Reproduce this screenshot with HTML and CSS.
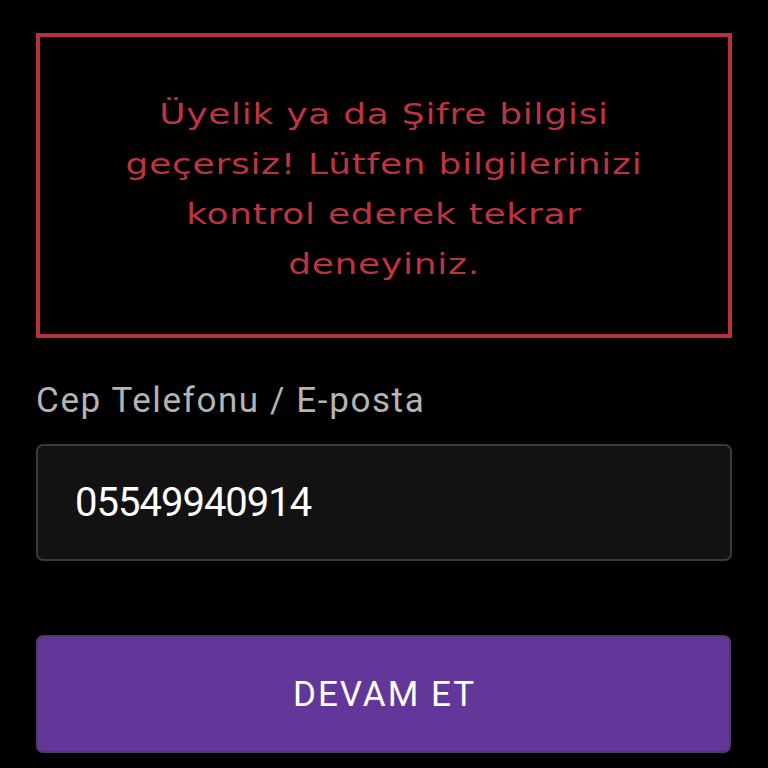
FILE: index.html
```html
<!DOCTYPE html>
<html lang="tr">
<head>
<meta charset="utf-8">
<link rel="stylesheet" href="styles.css">
</head>
<body>
<main class="page">
  <div class="alert">
    <p class="alert-text">Üyelik ya da Şifre bilgisi geçersiz! Lütfen bilgilerinizi kontrol ederek tekrar deneyiniz.</p>
  </div>
  <label class="field-label" for="user">Cep Telefonu / E-posta</label>
  <div class="field">
    <span class="field-value" id="user">05549940914</span>
  </div>
  <button class="btn" type="button">DEVAM ET</button>
</main>
</body>
</html>
```

FILE: styles.css
```css
html, body {
  margin: 0;
  padding: 0;
  background: #000;
}
.page {
  width: 768px;
  height: 768px;
  box-sizing: border-box;
  padding: 33px 36px 0 36px;
  display: flex;
  flex-direction: column;
  overflow: hidden;
}
.alert {
  height: 305px;
  box-sizing: border-box;
  border: 4px solid #b8313a;
  display: flex;
  align-items: center;
  justify-content: center;
  padding: 6px 0 0 0;
}
.alert-text {
  margin: 0;
  width: 460px;
  flex: none;
  text-align: center;
  font-family: "DejaVu Sans", sans-serif;
  font-weight: 400;
  font-size: 29px;
  letter-spacing: 0.6px;
  line-height: 50px;
  color: #bd343e;
  transform: scaleX(1.24);
  transform-origin: center;
}
.field-label {
  margin-top: 43px;
  font-family: Roboto, sans-serif;
  font-size: 35px;
  letter-spacing: 1.6px;
  line-height: 40px;
  color: #b4b4b4;
}
.field {
  margin-top: 23px;
  height: 117px;
  box-sizing: border-box;
  border: 2px solid #3a3a3a;
  border-radius: 7px;
  background: #121212;
  display: flex;
  align-items: center;
  padding-left: 37px;
}
.field-value {
  font-family: Roboto, sans-serif;
  font-size: 40px;
  letter-spacing: -1px;
  color: #fff;
}
.btn {
  margin-top: 74px;
  height: 118px;
  width: 695px;
  border: 2px solid #4b3a63;
  border-radius: 7px;
  background: #623799;
  color: #fff;
  font-family: Roboto, sans-serif;
  font-size: 35px;
  letter-spacing: 2px;
  padding: 0 0 0 2px;
}
```
